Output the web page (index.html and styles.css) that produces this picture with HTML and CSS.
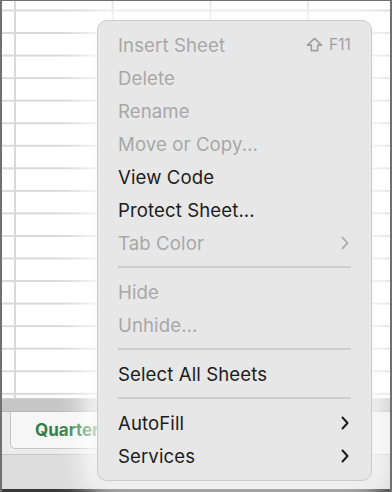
FILE: index.html
```html
<!DOCTYPE html>
<html>
<head>
<meta charset="utf-8">
<link rel="stylesheet" href="styles.css">
</head>
<body>
<div class="window">
  <div class="sheet"></div>
  <div class="band"></div>
  <div class="tabbar">
    <div class="tab-stub"></div>
    <div class="tab">Quarter 1</div>
  </div>
  <div class="status"></div>
  <div class="bottom"></div>

  <div class="menu">
    <div class="item disabled"><span class="label">Insert Sheet</span><span class="shortcut"><svg class="shift" viewBox="0 0 16 14" width="17" height="15"><path d="M8 1.2 L14.6 7.6 H11 V12.8 H5 V7.6 H1.4 Z" fill="none" stroke="currentColor" stroke-width="1.5" stroke-linejoin="round"/></svg>F11</span></div>
    <div class="item disabled"><span class="label">Delete</span></div>
    <div class="item disabled"><span class="label">Rename</span></div>
    <div class="item disabled"><span class="label">Move or Copy...</span></div>
    <div class="item"><span class="label">View Code</span></div>
    <div class="item"><span class="label">Protect Sheet...</span></div>
    <div class="item disabled"><span class="label">Tab Color</span><svg class="chev" viewBox="0 0 8 14" width="8" height="14"><path d="M1.5 1.5 L6.5 7 L1.5 12.5" fill="none" stroke="currentColor" stroke-width="1.8" stroke-linecap="round" stroke-linejoin="round"/></svg></div>
    <div class="sep"></div>
    <div class="item disabled"><span class="label">Hide</span></div>
    <div class="item disabled"><span class="label">Unhide...</span></div>
    <div class="sep"></div>
    <div class="item"><span class="label">Select All Sheets</span></div>
    <div class="sep"></div>
    <div class="item"><span class="label">AutoFill</span><svg class="chev" viewBox="0 0 8 14" width="8" height="14"><path d="M1.5 1.5 L6.5 7 L1.5 12.5" fill="none" stroke="currentColor" stroke-width="2" stroke-linecap="round" stroke-linejoin="round"/></svg></div>
    <div class="item"><span class="label">Services</span><svg class="chev" viewBox="0 0 8 14" width="8" height="14"><path d="M1.5 1.5 L6.5 7 L1.5 12.5" fill="none" stroke="currentColor" stroke-width="2" stroke-linecap="round" stroke-linejoin="round"/></svg></div>
  </div>
</div>
</body>
</html>
```
FILE: styles.css
```css
* { box-sizing: border-box; }
html, body { margin: 0; padding: 0; background: #ffffff; }
body { font-family: Inter, "Helvetica Neue", Arial, sans-serif; }

.window {
  position: relative;
  width: 392px;
  height: 492px;
  overflow: hidden;
  border-left: 2px solid #707070;
  border-right: 2px solid #707070;
  border-top: 1px solid #707070;
  display: flex;
  flex-direction: column;
  background: #ffffff;
}

.sheet {
  height: 398px;
  background-color: #ffffff;
  background-image:
    linear-gradient(to right, #d9d9d9 0, #d9d9d9 2px, transparent 2px),
    linear-gradient(to bottom, #d9d9d9 0, #d9d9d9 2px, transparent 2px);
  background-size: 97.7px 100%, 100% 22.55px;
  background-position: 12px 0, 0 8.5px;
  background-repeat: repeat-x, repeat-y;
  border-bottom: 1px solid #cfcfcf;
}

.band {
  height: 13px;
  background: #c6c6c6;
  border-bottom: 1px solid #b8b8b8;
}

.tabbar {
  height: 43px;
  background: #ececec;
  display: flex;
  align-items: stretch;
  border-bottom: 1px solid #c8c8c8;
}
.tab-stub { width: 8px; }
.tab {
  width: 110px;
  height: 37px;
  background: #f6f6f6;
  border: 1px solid #c4c4c4;
  border-top: none;
  border-radius: 0 0 5px 5px;
  color: #2f7f46;
  font-weight: 700;
  font-size: 17px;
  padding-left: 24px;
  display: flex;
  align-items: center;
  white-space: nowrap;
  overflow: hidden;
}

.status {
  flex: 1;
  background: #dcdcdc;
}
.bottom {
  height: 3px;
  background: #3a3a3a;
}

.menu {
  position: absolute;
  left: 95px;
  top: 19px;
  width: 275px;
  height: 461px;
  background: #e7e7e7;
  border: 1px solid #cbcbcb;
  border-radius: 10px;
  padding: 7px 20px 7px 20px;
  box-shadow: 0 0 28px 14px rgba(255,255,255,0.85), 0 2px 6px rgba(0,0,0,0.12);
  display: flex;
  flex-direction: column;
}

.item {
  height: 33px;
  display: flex;
  align-items: center;
  justify-content: space-between;
  font-size: 18.6px;
  color: #1c1c1c;
  letter-spacing: 0.1px;
}
.item.disabled { color: #a8a8a8; }

.shortcut {
  display: flex;
  align-items: center;
  gap: 6px;
  font-size: 15.5px;
  color: #9f9f9f;
}
.shift { display: block; }

.chev {
  display: block;
  margin-right: 2px;
}

.sep {
  height: 16px;
  display: flex;
  align-items: center;
}
.sep::before {
  content: "";
  display: block;
  width: 100%;
  height: 1.5px;
  background: #cdcdcd;
}
```
